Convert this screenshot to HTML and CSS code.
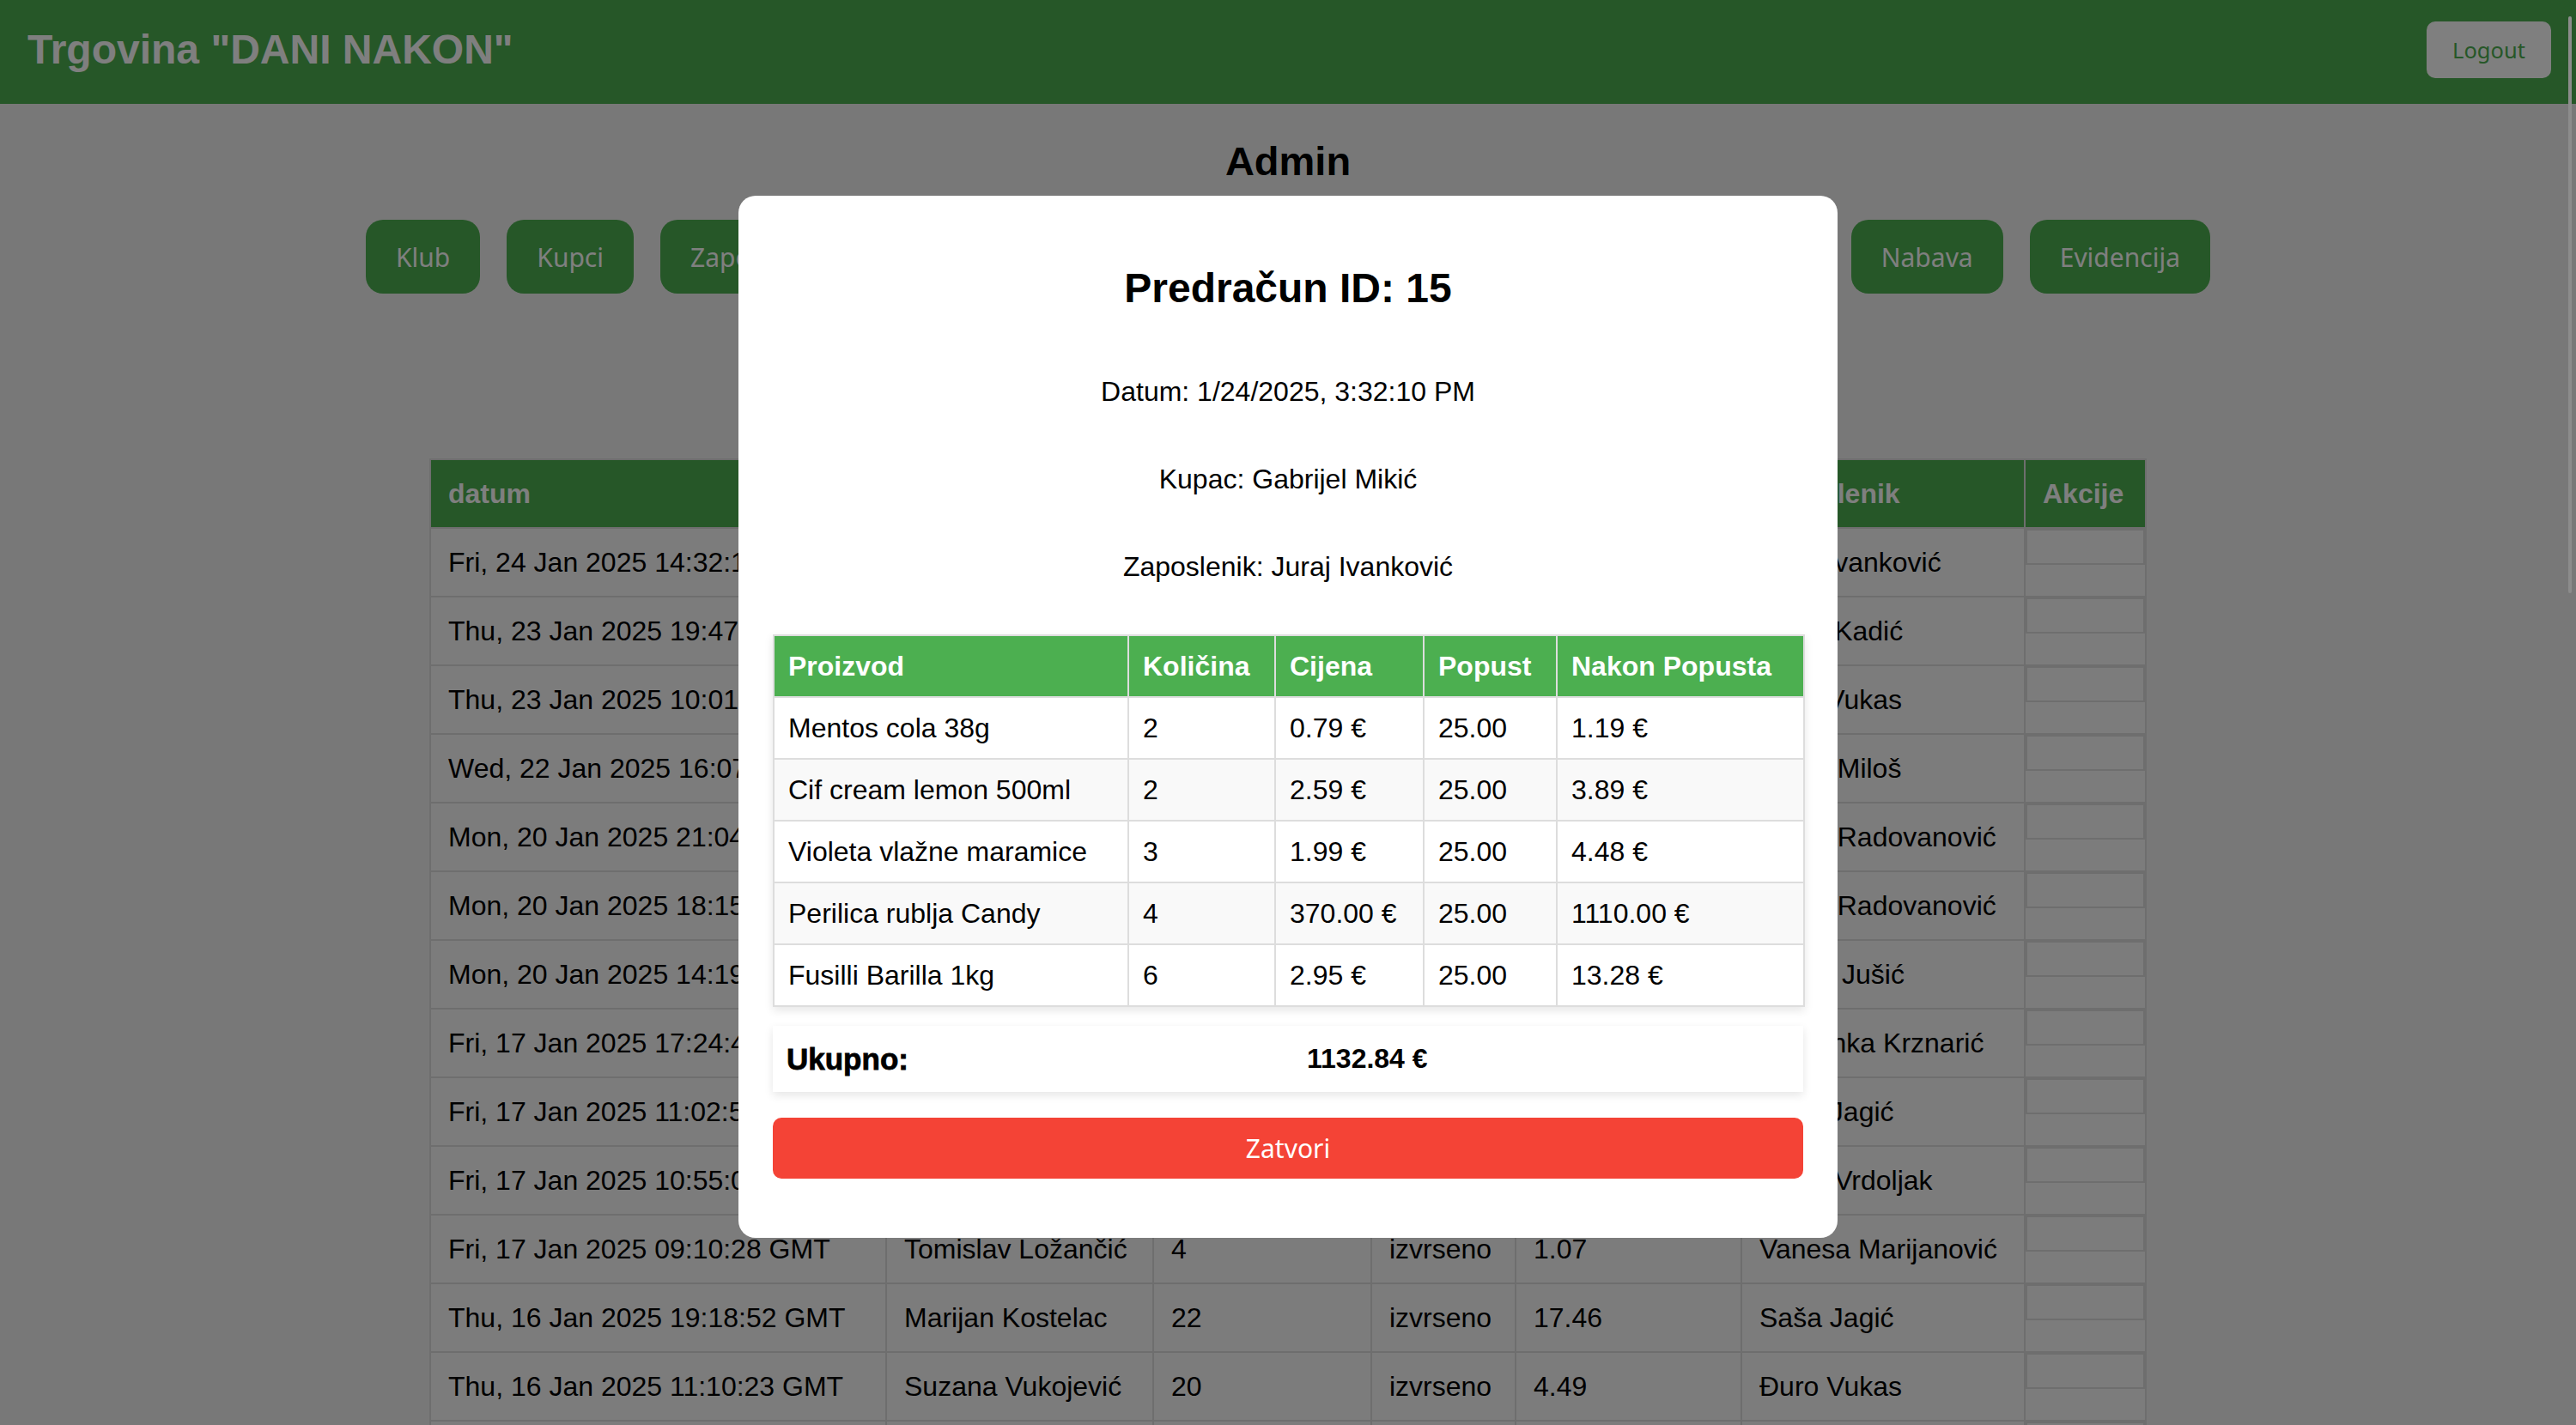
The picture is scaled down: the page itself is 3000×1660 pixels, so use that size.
FILE: index.html
```html
<!DOCTYPE html>
<html lang="hr">
<head>
<meta charset="utf-8">
<title>Trgovina "DANI NAKON" - Admin</title>
<link rel="stylesheet" href="styles.css">
</head>
<body>
<header class="topbar">
  <h1 class="brand">Trgovina "DANI NAKON"</h1>
  <button class="logout">Logout</button>
</header>

<main class="page">
  <h2 class="page-title">Admin</h2>
  <nav class="nav">
    <button class="nav-btn">Klub</button>
    <button class="nav-btn">Kupci</button>
    <button class="nav-btn">Zaposlenici</button>
    <button class="nav-btn">Proizvodi</button>
    <button class="nav-btn">Kategorije</button>
    <button class="nav-btn">Računi</button>
    <button class="nav-btn">Skladište</button>
    <button class="nav-btn">Statistika</button>
    <button class="nav-btn">Nabava</button>
    <button class="nav-btn">Evidencija</button>
  </nav>

  <table class="orders">
    <colgroup>
      <col class="c-datum"><col class="c-kupac"><col class="c-kol"><col class="c-status"><col class="c-iznos"><col class="c-zap"><col class="c-akc">
    </colgroup>
    <thead>
      <tr><th>datum</th><th>kupac</th><th>kolicina</th><th>status</th><th>iznos</th><th>zaposlenik</th><th>Akcije</th></tr>
    </thead>
    <tbody>
      <tr><td>Fri, 24 Jan 2025 14:32:10 GMT</td><td>Gabrijel Mikić</td><td>17</td><td>izvrseno</td><td>1132.84</td><td>Juraj Ivanković</td><td class="akc"><div class="akc-box"></div></td></tr>
      <tr><td>Thu, 23 Jan 2025 19:47:31 GMT</td><td>Ana Horvat</td><td>5</td><td>izvrseno</td><td>12.35</td><td>Ivana Kadić</td><td class="akc"><div class="akc-box"></div></td></tr>
      <tr><td>Thu, 23 Jan 2025 10:01:44 GMT</td><td>Luka Perić</td><td>9</td><td>izvrseno</td><td>23.70</td><td>Đuro Vukas</td><td class="akc"><div class="akc-box"></div></td></tr>
      <tr><td>Wed, 22 Jan 2025 16:07:12 GMT</td><td>Petra Novak</td><td>3</td><td>izvrseno</td><td>6.18</td><td>Sanja Miloš</td><td class="akc"><div class="akc-box"></div></td></tr>
      <tr><td>Mon, 20 Jan 2025 21:04:56 GMT</td><td>Ivan Babić</td><td>12</td><td>izvrseno</td><td>45.90</td><td>Sanja Radovanović</td><td class="akc"><div class="akc-box"></div></td></tr>
      <tr><td>Mon, 20 Jan 2025 18:15:20 GMT</td><td>Maja Jurić</td><td>7</td><td>izvrseno</td><td>9.84</td><td>Sanja Radovanović</td><td class="akc"><div class="akc-box"></div></td></tr>
      <tr><td>Mon, 20 Jan 2025 14:19:08 GMT</td><td>Karlo Knežević</td><td>2</td><td>izvrseno</td><td>3.20</td><td>Marija Jušić</td><td class="akc"><div class="akc-box"></div></td></tr>
      <tr><td>Fri, 17 Jan 2025 17:24:41 GMT</td><td>Lana Pavić</td><td>15</td><td>izvrseno</td><td>31.62</td><td>Jasminka Krznarić</td><td class="akc"><div class="akc-box"></div></td></tr>
      <tr><td>Fri, 17 Jan 2025 11:02:57 GMT</td><td>Filip Marić</td><td>6</td><td>izvrseno</td><td>8.45</td><td>Saša Jagić</td><td class="akc"><div class="akc-box"></div></td></tr>
      <tr><td>Fri, 17 Jan 2025 10:55:03 GMT</td><td>Ema Kovačević</td><td>11</td><td>izvrseno</td><td>19.03</td><td>Ivona Vrdoljak</td><td class="akc"><div class="akc-box"></div></td></tr>
      <tr><td>Fri, 17 Jan 2025 09:10:28 GMT</td><td>Tomislav Ložančić</td><td>4</td><td>izvrseno</td><td>1.07</td><td>Vanesa Marijanović</td><td class="akc"><div class="akc-box"></div></td></tr>
      <tr><td>Thu, 16 Jan 2025 19:18:52 GMT</td><td>Marijan Kostelac</td><td>22</td><td>izvrseno</td><td>17.46</td><td>Saša Jagić</td><td class="akc"><div class="akc-box"></div></td></tr>
      <tr><td>Thu, 16 Jan 2025 11:10:23 GMT</td><td>Suzana Vukojević</td><td>20</td><td>izvrseno</td><td>4.49</td><td>Đuro Vukas</td><td class="akc"><div class="akc-box"></div></td></tr>
      <tr><td>Wed, 15 Jan 2025 15:42:19 GMT</td><td>Dario Matić</td><td>8</td><td>izvrseno</td><td>11.26</td><td>Juraj Ivanković</td><td class="akc"><div class="akc-box"></div></td></tr>
      <tr><td>Wed, 15 Jan 2025 09:30:02 GMT</td><td>Nina Grgić</td><td>1</td><td>izvrseno</td><td>2.99</td><td>Ivana Kadić</td><td class="akc"><div class="akc-box"></div></td></tr>
    </tbody>
  </table>
</main>

<div class="overlay">
  <div class="modal">
    <h2 class="modal-title">Predračun ID: 15</h2>
    <p class="info">Datum: 1/24/2025, 3:32:10 PM</p>
    <p class="info">Kupac: Gabrijel Mikić</p>
    <p class="info info-last">Zaposlenik: Juraj Ivanković</p>

    <table class="items">
      <colgroup>
        <col class="i-name"><col class="i-qty"><col class="i-price"><col class="i-disc"><col class="i-after">
      </colgroup>
      <thead>
        <tr><th>Proizvod</th><th>Količina</th><th>Cijena</th><th>Popust</th><th>Nakon Popusta</th></tr>
      </thead>
      <tbody>
        <tr><td>Mentos cola 38g</td><td>2</td><td>0.79 €</td><td>25.00</td><td>1.19 €</td></tr>
        <tr class="alt"><td>Cif cream lemon 500ml</td><td>2</td><td>2.59 €</td><td>25.00</td><td>3.89 €</td></tr>
        <tr><td>Violeta vlažne maramice</td><td>3</td><td>1.99 €</td><td>25.00</td><td>4.48 €</td></tr>
        <tr class="alt"><td>Perilica rublja Candy</td><td>4</td><td>370.00 €</td><td>25.00</td><td>1110.00 €</td></tr>
        <tr><td>Fusilli Barilla 1kg</td><td>6</td><td>2.95 €</td><td>25.00</td><td>13.28 €</td></tr>
      </tbody>
    </table>

    <div class="total">
      <span class="total-label">Ukupno:</span>
      <span class="total-value">1132.84 €</span>
    </div>

    <button class="close-btn">Zatvori</button>
  </div>
</div>

<div class="scroll-thumb"></div>
</body>
</html>
```

FILE: styles.css
```css
* {
  box-sizing: border-box;
}

html,
body {
  margin: 0;
  overflow: hidden;
}

body {
  background: #f1f1f1;
  color: #000;
  font-family: "Liberation Sans", Arial, sans-serif;
  width: 3000px;
  height: 1660px;
}

/* ---------- top bar ---------- */
.topbar {
  height: 121px;
  background: #4caf50;
  display: flex;
  align-items: center;
  justify-content: space-between;
  padding: 0 29px 6px 32px;
}

.brand {
  margin: 0;
  color: #fff;
  font-size: 48px;
  line-height: 55px;
  font-weight: bold;
}

.logout {
  width: 145px;
  height: 66px;
  padding: 0;
  border: none;
  border-radius: 10px;
  background: #fff;
  color: #4caf50;
  font-family: "Noto Sans", sans-serif;
  font-size: 25.5px;
}

/* ---------- page ---------- */
.page-title {
  margin: 39px 0 0;
  text-align: center;
  font-size: 47px;
  line-height: 55px;
  font-weight: bold;
}

.nav {
  display: flex;
  justify-content: center;
  gap: 31px;
  margin-top: 41px;
}

.nav-btn {
  height: 86px;
  padding: 0 35px;
  border: none;
  border-radius: 20px;
  background: #4caf50;
  color: #fff;
  font-family: "Noto Sans", sans-serif;
  font-size: 30px;
}

.orders {
  margin: 192px auto 0;
  width: 1998px;
  border-collapse: collapse;
  table-layout: fixed;
  background: #f8f8f8;
  font-size: 32px;
}

.c-datum { width: 531px; }
.c-kupac { width: 311px; }
.c-kol { width: 254px; }
.c-status { width: 168px; }
.c-iznos { width: 263px; }
.c-zap { width: 330px; }
.c-akc { width: 141px; }

.orders th,
.orders td {
  border: 2px solid #dcdcdc;
  padding: 20px 20px;
  line-height: 38px;
  text-align: left;
  white-space: nowrap;
  overflow: hidden;
}

.orders th {
  background: #4caf50;
  color: #fff;
  font-weight: bold;
}

.orders td.akc {
  padding: 0;
  vertical-align: top;
}

.akc-box {
  height: 42px;
  border: 2px solid #dcdcdc;
}

/* ---------- modal ---------- */
.overlay {
  position: fixed;
  inset: 0;
  background: rgba(0, 0, 0, 0.5);
  display: flex;
  align-items: center;
  justify-content: center;
}

.modal {
  width: 1280px;
  margin-top: 10px;
  padding: 40px;
  background: #fff;
  border-radius: 20px;
  text-align: center;
}

.modal-title {
  margin: 40px 0 75px;
  font-size: 48px;
  line-height: 55px;
  font-weight: bold;
}

.info {
  margin: 0 0 66px;
  font-size: 32px;
  line-height: 36px;
}

.info-last {
  margin-bottom: 61px;
}

.items {
  width: 100%;
  border-collapse: collapse;
  table-layout: fixed;
  box-shadow: 0 4px 10px rgba(0, 0, 0, 0.1);
  font-size: 32px;
  text-align: left;
  background: #fff;
}

.i-name { width: 413px; }
.i-qty { width: 171px; }
.i-price { width: 173px; }
.i-disc { width: 155px; }
.i-after { width: 288px; }

.items th,
.items td {
  border: 2px solid #ddd;
  padding: 16px;
  line-height: 38px;
  white-space: nowrap;
  text-align: left;
}

.items th {
  background: #4caf50;
  color: #fff;
  font-weight: bold;
}

.items tr.alt td {
  background: #f9f9f9;
}

.total {
  margin-top: 22px;
  height: 77px;
  display: grid;
  grid-template-columns: 1fr 1fr;
  align-items: center;
  padding: 0 16px;
  background: #fff;
  box-shadow: 0 4px 10px rgba(0, 0, 0, 0.1);
  text-align: left;
}

.total-label {
  font-size: 35px;
  font-weight: bold;
  -webkit-text-stroke: 0.8px #000;
}

.total-value {
  padding-left: 22px;
  font-size: 32px;
  font-weight: bold;
}

.close-btn {
  display: block;
  width: 100%;
  height: 71px;
  margin: 30px 0 29px;
  border: none;
  border-radius: 10px;
  background: #f44336;
  color: #fff;
  font-family: "Noto Sans", sans-serif;
  font-size: 30px;
}

.scroll-thumb {
  position: fixed;
  top: 19px;
  right: 5px;
  width: 4px;
  height: 672px;
  border-radius: 2px;
  background: #8c8c8c;
}
```
